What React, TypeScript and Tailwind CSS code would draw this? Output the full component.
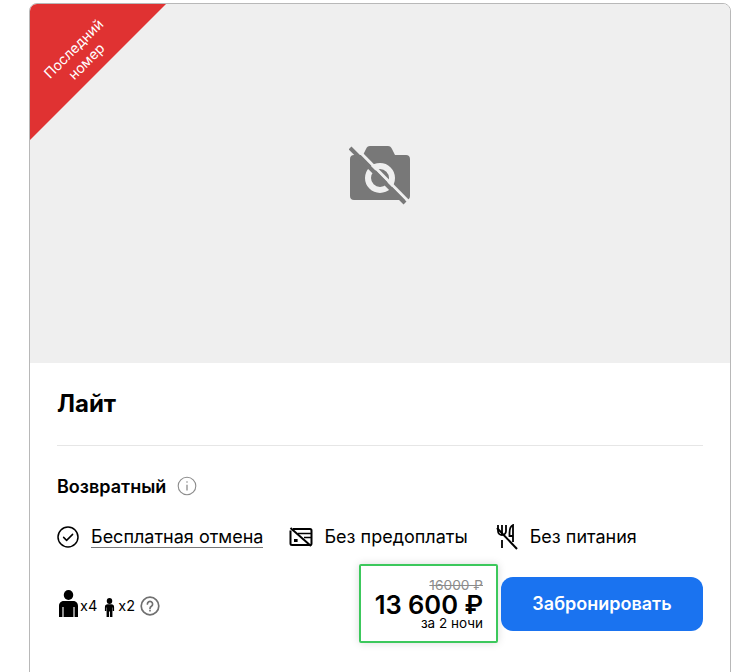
import React from 'react';

const InfoIcon = () => (
  <svg width="20" height="20" viewBox="0 0 20 20" fill="none" stroke="#8c8c8c" strokeWidth="1.1">
    <circle cx="10" cy="10" r="8.8" />
    <path d="M10 8.8v5.6" strokeWidth="1.3" />
    <circle cx="10" cy="6" r="0.8" fill="#8c8c8c" stroke="none" />
  </svg>
);

const CheckIcon = () => (
  <svg width="22" height="22" viewBox="0 0 22 22" fill="none" stroke="#000" strokeWidth="1.5">
    <circle cx="11" cy="11" r="10" />
    <path d="M6.6 11.4l3 3 6-6" strokeLinecap="round" strokeLinejoin="round" />
  </svg>
);

const NoCardIcon = () => (
  <svg width="24" height="20" viewBox="0 0 24 20" fill="none" stroke="#000" strokeWidth="2">
    <path d="M4 2h17a1.500 1.500 0 0 1 1.500 1.500v13a1.500 1.500 0 0 1-1.500 1.500H3a1.500 1.500 0 0 1-1.500-1.500V3.500" />
    <path d="M9 6.500h13.500M15 10.500h7" strokeWidth="1.600" />
    <path d="M1.500 1l20.500 18" />
    <rect x="5" y="12" width="3.600" height="3" fill="#000" stroke="none" />
  </svg>
);

const NoFoodIcon = () => (
  <svg width="22" height="26" viewBox="0 0 22 26" fill="none" stroke="#000" strokeWidth="1.800">
    <path d="M2 1v6a4 4 0 0 0 8 0V1M6 1v10M6 16v8" />
    <path d="M17 18V1c-2.500 1-3.500 4-3.500 8v3H17" />
    <path d="M1 4l20 21" strokeWidth="2" />
  </svg>
);

const AdultIcon = () => (
  <svg width="19" height="27" viewBox="0 0 20 27" fill="#000" preserveAspectRatio="none">
    <circle cx="10" cy="5" r="5" />
    <path d="M0 27V16c0-3.400 2.500-5 5-5h10c2.500 0 5 1.600 5 5v11h-3.600V17h-1.200v10H4.800V17H3.600v10z" />
  </svg>
);

const ChildIcon = () => (
  <svg width="11" height="19" viewBox="0 0 12 19" fill="#000" preserveAspectRatio="none">
    <circle cx="6" cy="3" r="3" />
    <path d="M1 13V9c0-1.800 1.200-2.800 3-2.800h4c1.800 0 3 1 3 2.800v4H9.600V9.500H9.200V19H6.500v-5.500h-1V19H2.800V9.500h-.4V13z" />
  </svg>
);

const QuestionIcon = () => (
  <svg width="20" height="20" viewBox="0 0 20 20" fill="none" stroke="#707070" strokeWidth="1.700">
    <circle cx="10" cy="10" r="8.800" />
    <path d="M7.400 8a2.600 2.600 0 1 1 4 2.200c-.9.600-1.400 1-1.400 2.200" strokeLinecap="round" />
    <circle cx="10" cy="14.700" r="0.900" fill="#707070" stroke="none" />
  </svg>
);

const NoPhotoIcon = () => (
  <svg width="62" height="62" viewBox="0 0 62 62" fill="none">
    <path
      fill="#787878"
      fillRule="evenodd"
      d="M5 10h9l3-6c.8-2 2-3 4-3h18c2 0 3 1 4 3l3 6h11c2.500 0 4 1.500 4 4v37c0 2.500-1.500 4-4 4H5c-2.500 0-4-1.500-4-4V14c0-2.500 1.500-4 4-4zM31 18a15 15 0 1 0 0 30 15 15 0 0 0 0-30zM31 24a9 9 0 1 1 0 18 9 9 0 0 1 0-18z"
    />
    <path d="M4 0l56 57" stroke="#efefef" strokeWidth="3" />
    <path d="M1 3l55 55" stroke="#787878" strokeWidth="4" />
  </svg>
);

export default function App() {
  return (
    <div className="h-[672px] overflow-hidden bg-white pl-[29px] pr-[22px] pt-[3px] font-['Inter','Noto_Sans',sans-serif] text-black">
      <div className="h-[720px] overflow-hidden rounded-lg border border-[#b8b8b8]">
        {/* Photo placeholder */}
        <div className="relative flex h-[359px] items-start justify-center bg-[#efefef] pt-[141px]">
          <div className="absolute left-0 top-0 h-[136px] w-[136px] bg-[#e03232] [clip-path:polygon(0_0,100%_0,0_100%)]" />
          <div className="absolute left-0 top-[33px] w-[100px] -rotate-45 text-center text-[14px] leading-[18px] text-white">
            Последний
            <br />
            номер
          </div>
          <NoPhotoIcon />
        </div>

        <div className="px-[27px]">
          <h2 className="mt-[26px] text-[24px] font-bold leading-[30px]">Лайт</h2>
          <div className="mt-[26px] h-px bg-[#e6e6e6]" />

          <div className="mt-[31px] flex items-center gap-[11px]">
            <span className="text-[18px] font-semibold leading-[20px]">Возвратный</span>
            <span className="-mt-[2px]"><InfoIcon /></span>
          </div>

          <div className="mt-[27px] flex items-center text-[18px] leading-[24px]">
            <CheckIcon />
            <span className="ml-[12px] border-b border-[#777] leading-[21px]">Бесплатная отмена</span>
            <span className="ml-[26px] flex items-center">
              <NoCardIcon />
              <span className="ml-[11px]">Без предоплаты</span>
            </span>
            <span className="ml-[28px] flex items-center">
              <NoFoodIcon />
              <span className="ml-[12px]">Без питания</span>
            </span>
          </div>

          <div className="mt-[14px] flex items-center">
            <div className="flex items-end pl-[2px] text-[14.5px] leading-[18px]">
              <AdultIcon />
              <span className="mb-[2px] ml-[2px]">x4</span>
              <span className="ml-[7px]"><ChildIcon /></span>
              <span className="mb-[2px] ml-[3px]">x2</span>
              <span className="mb-[1px] ml-[5px]"><QuestionIcon /></span>
            </div>
            <div className="ml-auto flex items-center gap-[3px]">
              <div className="flex h-[79px] w-[139px] flex-col items-end justify-center rounded-[2px] border-[2px] border-[#3cc85c] pb-[2px] pr-[13px] shadow-[0_0_8px_rgba(0,0,0,0.15)]">
                <span className="text-[13.75px] leading-[14px] text-[#8c8c8c] line-through">16000 ₽</span>
                <span className="text-[25.5px] font-semibold leading-[26px]">13 600 ₽</span>
                <span className="text-[13.5px] leading-[10px]">за 2 ночи</span>
              </div>
              <button className="h-[54px] w-[202px] rounded-xl bg-[#1a73f0] text-[18px] font-semibold text-white">
                Забронировать
              </button>
            </div>
          </div>
        </div>
      </div>
    </div>
  );
}
